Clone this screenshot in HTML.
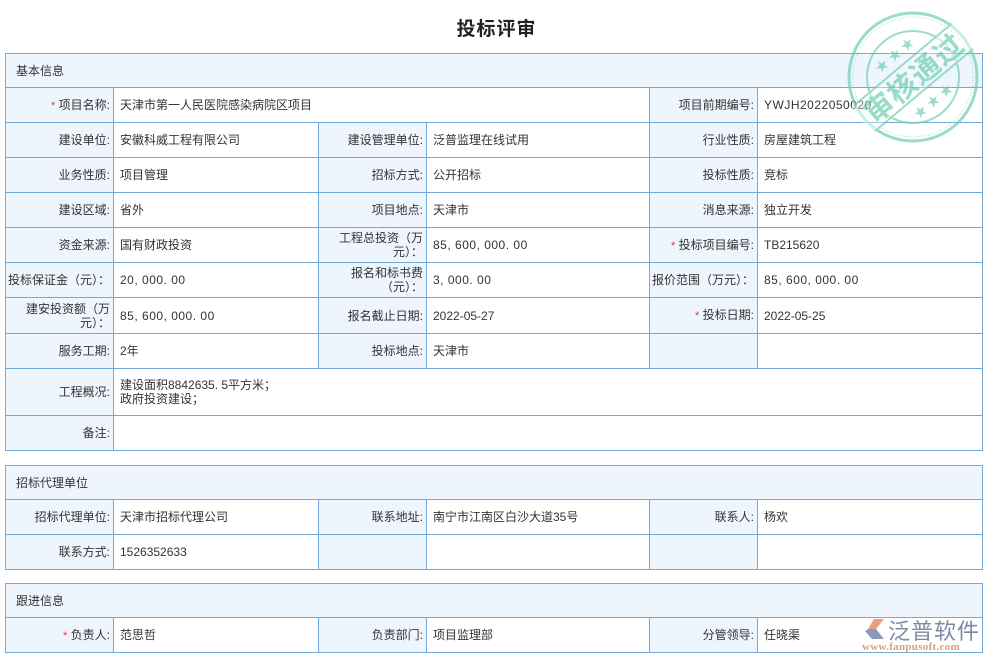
<!DOCTYPE html>
<html><head><meta charset="utf-8">
<style>
*{margin:0;padding:0;box-sizing:border-box}
body{width:993px;height:662px;background:#fff;font-family:"Liberation Sans","Noto Sans CJK SC",sans-serif;font-size:12px;color:#333;position:relative;overflow:hidden}
h1{position:absolute;top:14px;left:0;width:993px;text-align:center;font-size:19px;font-weight:bold;color:#222;letter-spacing:1px}
table{position:absolute;left:5px;width:977px;border-collapse:collapse;table-layout:fixed}
td{border:1px solid #74a9dc;padding:0 6px;vertical-align:middle;line-height:14px}
td.l{background:#eef5fd;text-align:right;padding-right:3px;padding-left:2px}
td.h{background:#eef5fd;padding-left:10px}
.r{color:#e33;font-size:11px}
.num{letter-spacing:0.5px}
</style></head><body>
<h1>投标评审</h1>
<table style="top:53px">
<colgroup><col style="width:108px"><col style="width:205px"><col style="width:108px"><col style="width:223px"><col style="width:108px"><col style="width:225px"></colgroup>
<tr style="height:34px"><td class="h" colspan="6">基本信息</td></tr>
<tr style="height:35px"><td class="l"><span class="r">*</span> 项目名称:</td><td colspan="3">天津市第一人民医院感染病院区项目</td><td class="l">项目前期编号:</td><td class="num">YWJH2022050020</td></tr>
<tr style="height:35px"><td class="l">建设单位:</td><td>安徽科威工程有限公司</td><td class="l">建设管理单位:</td><td>泛普监理在线试用</td><td class="l">行业性质:</td><td>房屋建筑工程</td></tr>
<tr style="height:35px"><td class="l">业务性质:</td><td>项目管理</td><td class="l">招标方式:</td><td>公开招标</td><td class="l">投标性质:</td><td>竞标</td></tr>
<tr style="height:35px"><td class="l">建设区域:</td><td>省外</td><td class="l">项目地点:</td><td>天津市</td><td class="l">消息来源:</td><td>独立开发</td></tr>
<tr style="height:35px"><td class="l">资金来源:</td><td>国有财政投资</td><td class="l">工程总投资（万元）：</td><td class="num">85, 600, 000. 00</td><td class="l"><span class="r">*</span> 投标项目编号:</td><td>TB215620</td></tr>
<tr style="height:35px"><td class="l">投标保证金（元）：</td><td class="num">20, 000. 00</td><td class="l">报名和标书费（元）：</td><td class="num">3, 000. 00</td><td class="l">报价范围（万元）：</td><td class="num">85, 600, 000. 00</td></tr>
<tr style="height:36px"><td class="l">建安投资额（万元）：</td><td class="num">85, 600, 000. 00</td><td class="l">报名截止日期:</td><td>2022-05-27</td><td class="l"><span class="r">*</span> 投标日期:</td><td>2022-05-25</td></tr>
<tr style="height:35px"><td class="l">服务工期:</td><td>2年</td><td class="l">投标地点:</td><td>天津市</td><td class="l"></td><td></td></tr>
<tr style="height:47px"><td class="l">工程概况:</td><td colspan="5">建设面积8842635. 5平方米；<br>政府投资建设；</td></tr>
<tr style="height:35px"><td class="l">备注:</td><td colspan="5"></td></tr>
</table>
<table style="top:465px">
<colgroup><col style="width:108px"><col style="width:205px"><col style="width:108px"><col style="width:223px"><col style="width:108px"><col style="width:225px"></colgroup>
<tr style="height:34px"><td class="h" colspan="6">招标代理单位</td></tr>
<tr style="height:35px"><td class="l">招标代理单位:</td><td>天津市招标代理公司</td><td class="l">联系地址:</td><td>南宁市江南区白沙大道35号</td><td class="l">联系人:</td><td>杨欢</td></tr>
<tr style="height:35px"><td class="l">联系方式:</td><td>1526352633</td><td class="l"></td><td></td><td class="l"></td><td></td></tr>
</table>
<table style="top:583px">
<colgroup><col style="width:108px"><col style="width:205px"><col style="width:108px"><col style="width:223px"><col style="width:108px"><col style="width:225px"></colgroup>
<tr style="height:34px"><td class="h" colspan="6">跟进信息</td></tr>
<tr style="height:35px"><td class="l"><span class="r">*</span> 负责人:</td><td>范思哲</td><td class="l">负责部门:</td><td>项目监理部</td><td class="l">分管领导:</td><td>任晓渠</td></tr>
</table>
<svg style="position:absolute;left:845px;top:9px;opacity:0.7" width="136" height="136" viewBox="0 0 136 136">
<g fill="none" stroke="#6fcfb2">
<circle cx="68" cy="68" r="64" stroke-width="3"/>
<circle cx="68" cy="68" r="60" stroke-width="1" stroke-dasharray="1 2"/>
<circle cx="68" cy="68" r="46" stroke-width="2"/>
</g>
<g transform="rotate(-40 68 68)">
<rect x="0" y="52" width="136" height="33" fill="#fff" opacity="0.5"/>
<line x1="4" y1="52" x2="132" y2="52" stroke="#6fcfb2" stroke-width="2"/>
<line x1="4" y1="85" x2="132" y2="85" stroke="#6fcfb2" stroke-width="2"/>
<text x="68" y="80" text-anchor="middle" font-family="'Noto Sans CJK SC',sans-serif" font-weight="bold" font-size="29" fill="#6fcfb2" letter-spacing="1">审核通过</text>
<text x="68" y="44" text-anchor="middle" font-size="13" fill="#6fcfb2">★ ★ ★</text>
<text x="68" y="104" text-anchor="middle" font-size="13" fill="#6fcfb2">★ ★ ★</text>
</g>
</svg>
<div style="position:absolute;left:862px;top:616px;width:120px;height:36px">
<svg style="position:absolute;left:2px;top:2px" width="24" height="22" viewBox="0 0 24 22"><path d="M10 1 L20 1 L12 11 L4 11 Z" fill="#e8a07a"/><path d="M4 11 L12 11 L20 21 L8 21 L1 13 Z" fill="#8a9ab8"/></svg>
<div style="position:absolute;left:26px;top:-2px;font-size:22px;color:#7d8aa6;font-family:'Noto Sans CJK SC',sans-serif;letter-spacing:1px">泛普软件</div>
<div style="position:absolute;left:0;top:25px;font-size:11px;color:#d9a080;font-family:'Liberation Serif',serif;font-weight:bold;letter-spacing:0.3px">www.fanpusoft.com</div>
</div>
</body></html>
